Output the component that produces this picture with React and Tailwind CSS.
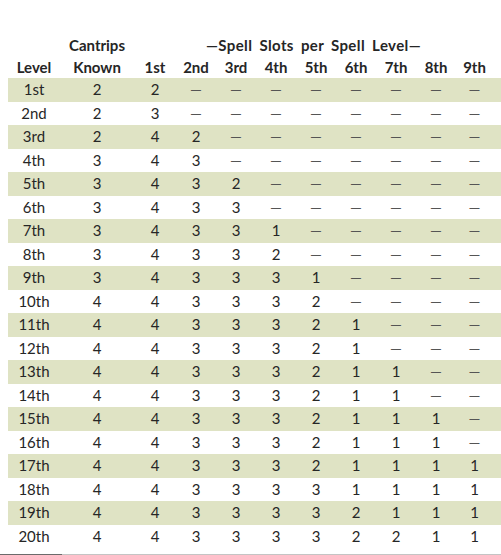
import React from "react";

const D = "—";
const rows = [
  ["1st", 2, [2, D, D, D, D, D, D, D, D]],
  ["2nd", 2, [3, D, D, D, D, D, D, D, D]],
  ["3rd", 2, [4, 2, D, D, D, D, D, D, D]],
  ["4th", 3, [4, 3, D, D, D, D, D, D, D]],
  ["5th", 3, [4, 3, 2, D, D, D, D, D, D]],
  ["6th", 3, [4, 3, 3, D, D, D, D, D, D]],
  ["7th", 3, [4, 3, 3, 1, D, D, D, D, D]],
  ["8th", 3, [4, 3, 3, 2, D, D, D, D, D]],
  ["9th", 3, [4, 3, 3, 3, 1, D, D, D, D]],
  ["10th", 4, [4, 3, 3, 3, 2, D, D, D, D]],
  ["11th", 4, [4, 3, 3, 3, 2, 1, D, D, D]],
  ["12th", 4, [4, 3, 3, 3, 2, 1, D, D, D]],
  ["13th", 4, [4, 3, 3, 3, 2, 1, 1, D, D]],
  ["14th", 4, [4, 3, 3, 3, 2, 1, 1, D, D]],
  ["15th", 4, [4, 3, 3, 3, 2, 1, 1, 1, D]],
  ["16th", 4, [4, 3, 3, 3, 2, 1, 1, 1, D]],
  ["17th", 4, [4, 3, 3, 3, 2, 1, 1, 1, 1]],
  ["18th", 4, [4, 3, 3, 3, 3, 1, 1, 1, 1]],
  ["19th", 4, [4, 3, 3, 3, 3, 2, 1, 1, 1]],
  ["20th", 4, [4, 3, 3, 3, 3, 2, 2, 1, 1]],
];

const cols = "grid grid-cols-[52px_74px_42px_40px_40px_40px_40px_40px_40px_40px_37px]";
const levels = ["1st", "2nd", "3rd", "4th", "5th", "6th", "7th", "8th", "9th"];

export default function App() {
  return (
    <div
      className="w-[501px] h-[555px] bg-white text-[#262626] flex flex-col"
      style={{ fontFamily: "Lato, 'Open Sans', sans-serif" }}
    >
      <div className="pl-[8px] pt-[34px] flex flex-col text-[15px] leading-none">
        <div className={`${cols} h-[22px] items-center font-bold`}>
          <div />
          <div className="text-center">Cantrips</div>
          <div className="col-span-9 text-center tracking-[0.4px] [word-spacing:3px]">—Spell Slots per Spell Level—</div>
        </div>
        <div className={`${cols} h-[22px] items-center font-bold`}>
          <div className="text-center">Level</div>
          <div className="text-center">Known</div>
          {levels.map((l) => (
            <div key={l} className="text-center">{l}</div>
          ))}
        </div>
        {rows.map(([lvl, c, slots], i) => (
          <div
            key={lvl}
            className={`${cols} h-[23.5px] items-center ${i % 2 === 0 ? "bg-[#dfe3c4]" : ""}`}
          >
            <div className="text-center">{lvl}</div>
            <div className="text-center">{c}</div>
            {slots.map((s, j) => (
              <div key={j} className={`text-center ${s === D ? "text-[#555]" : ""}`}>{s}</div>
            ))}
          </div>
        ))}
      </div>
      <div className="flex-1" />
      <div className="h-px flex">
        <div className="w-[62px] bg-[#6b6b6b]" />
        <div className="flex-1 bg-[#c4c4c4]" />
      </div>
    </div>
  );
}
